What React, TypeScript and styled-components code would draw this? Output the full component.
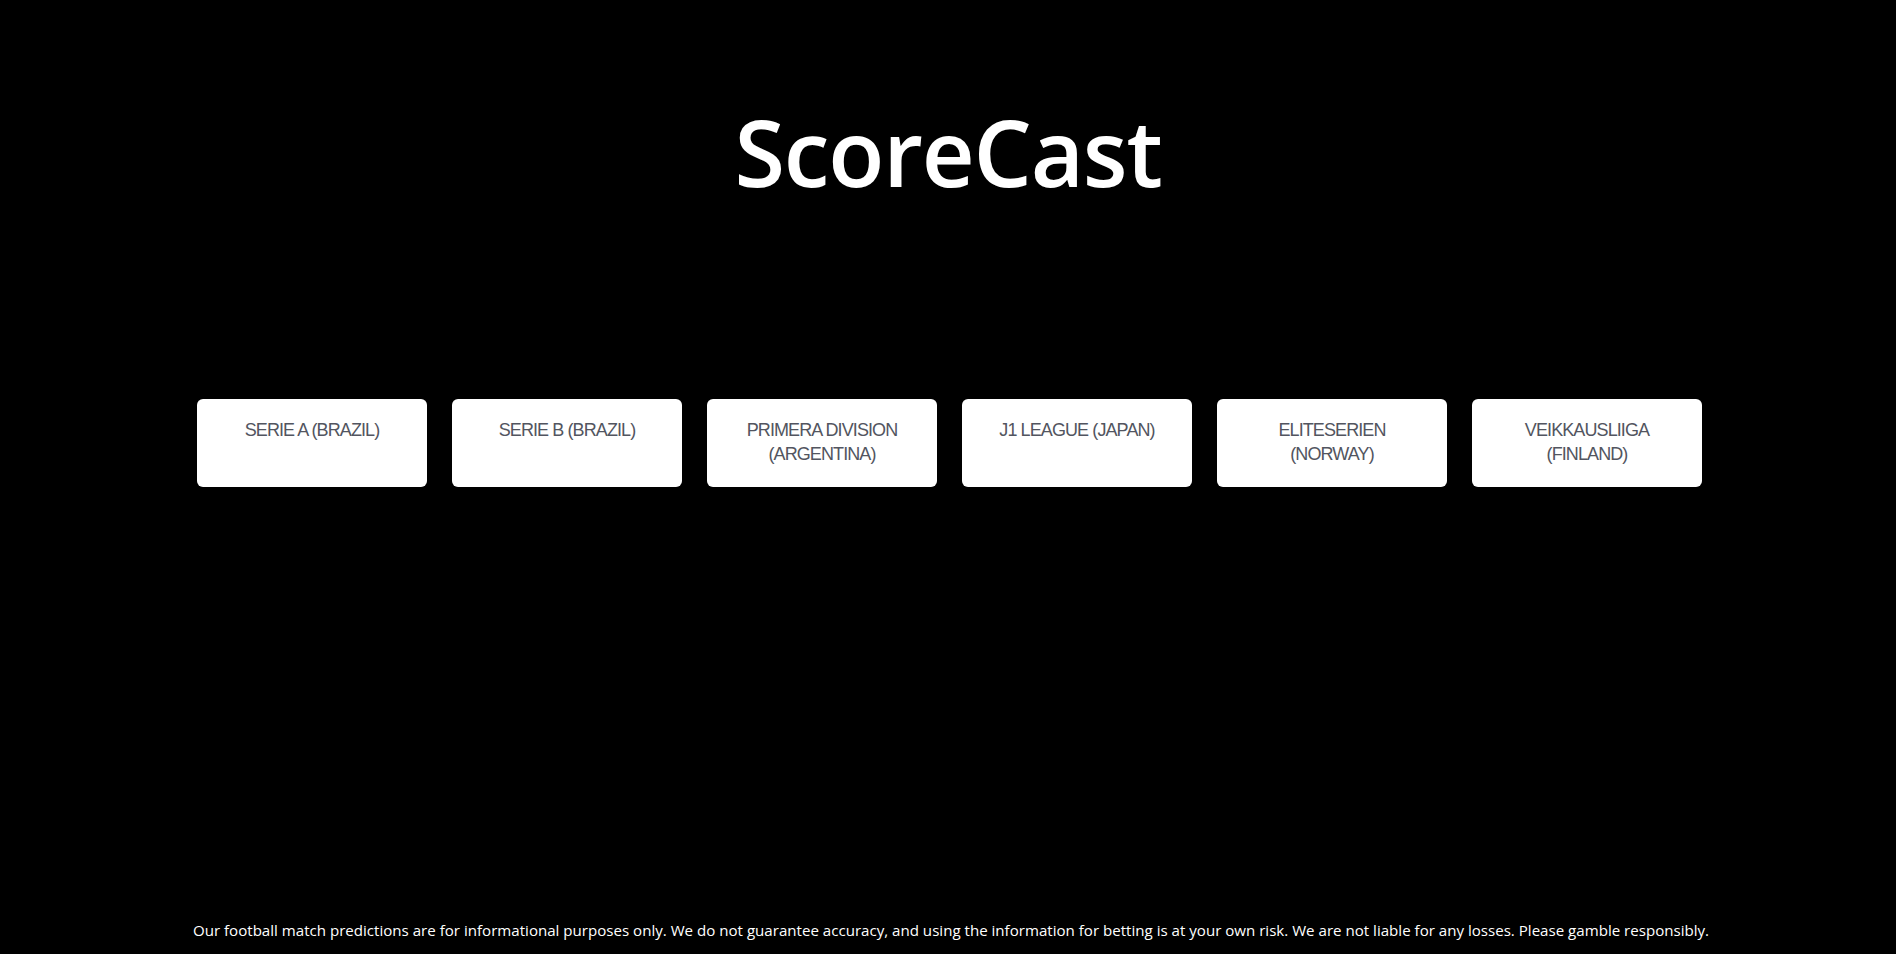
import React from 'react';
import styled, { createGlobalStyle } from 'styled-components';

const GlobalStyle = createGlobalStyle`
  html, body {
    margin: 0;
    padding: 0;
    background: #000;
  }
  * {
    box-sizing: border-box;
  }
`;

const StyledPage = styled.main`
  min-height: 100vh;
  display: flex;
  flex-direction: column;
  align-items: center;
  background: #000;
  font-family: 'Open Sans', 'Noto Sans', sans-serif;
`;

const StyledTitle = styled.h1`
  margin: 106px 0 0 0;
  font-size: 92px;
  line-height: 1;
  font-weight: 600;
  color: #fff;
  letter-spacing: -1.2px;
`;

const StyledLeagues = styled.div`
  display: flex;
  gap: 25px;
  margin-top: 201px;
  padding-left: 3px;
`;

const StyledLeague = styled.button`
  width: 230px;
  height: 88px;
  padding: 20px 24px 0 24px;
  display: flex;
  justify-content: center;
  align-items: flex-start;
  background: #fff;
  border: none;
  border-radius: 6px;
  color: #525560;
  font-family: 'Liberation Sans', Arial, sans-serif;
  font-size: 18px;
  line-height: 23.5px;
  letter-spacing: -0.9px;
  text-align: center;
  cursor: pointer;
`;

const StyledFooter = styled.footer`
  margin-top: auto;
  padding: 0 0 14px 6px;
  color: #fff;
  font-size: 15.1px;
  line-height: 20px;
  text-align: center;
`;

const leagues = [
  'SERIE A (BRAZIL)',
  'SERIE B (BRAZIL)',
  'PRIMERA DIVISION (ARGENTINA)',
  'J1 LEAGUE (JAPAN)',
  'ELITESERIEN (NORWAY)',
  'VEIKKAUSLIIGA (FINLAND)',
];

export default function App() {
  return (
    <React.Fragment>
      <GlobalStyle />
      <StyledPage>
        <StyledTitle>ScoreCast</StyledTitle>
        <StyledLeagues>
          {leagues.map((league) => (
            <StyledLeague key={league}>{league}</StyledLeague>
          ))}
        </StyledLeagues>
        <StyledFooter>
          Our football match predictions are for informational purposes only.
          We do not guarantee accuracy, and using the information for betting
          is at your own risk. We are not liable for any losses. Please gamble
          responsibly.
        </StyledFooter>
      </StyledPage>
    </React.Fragment>
  );
}
